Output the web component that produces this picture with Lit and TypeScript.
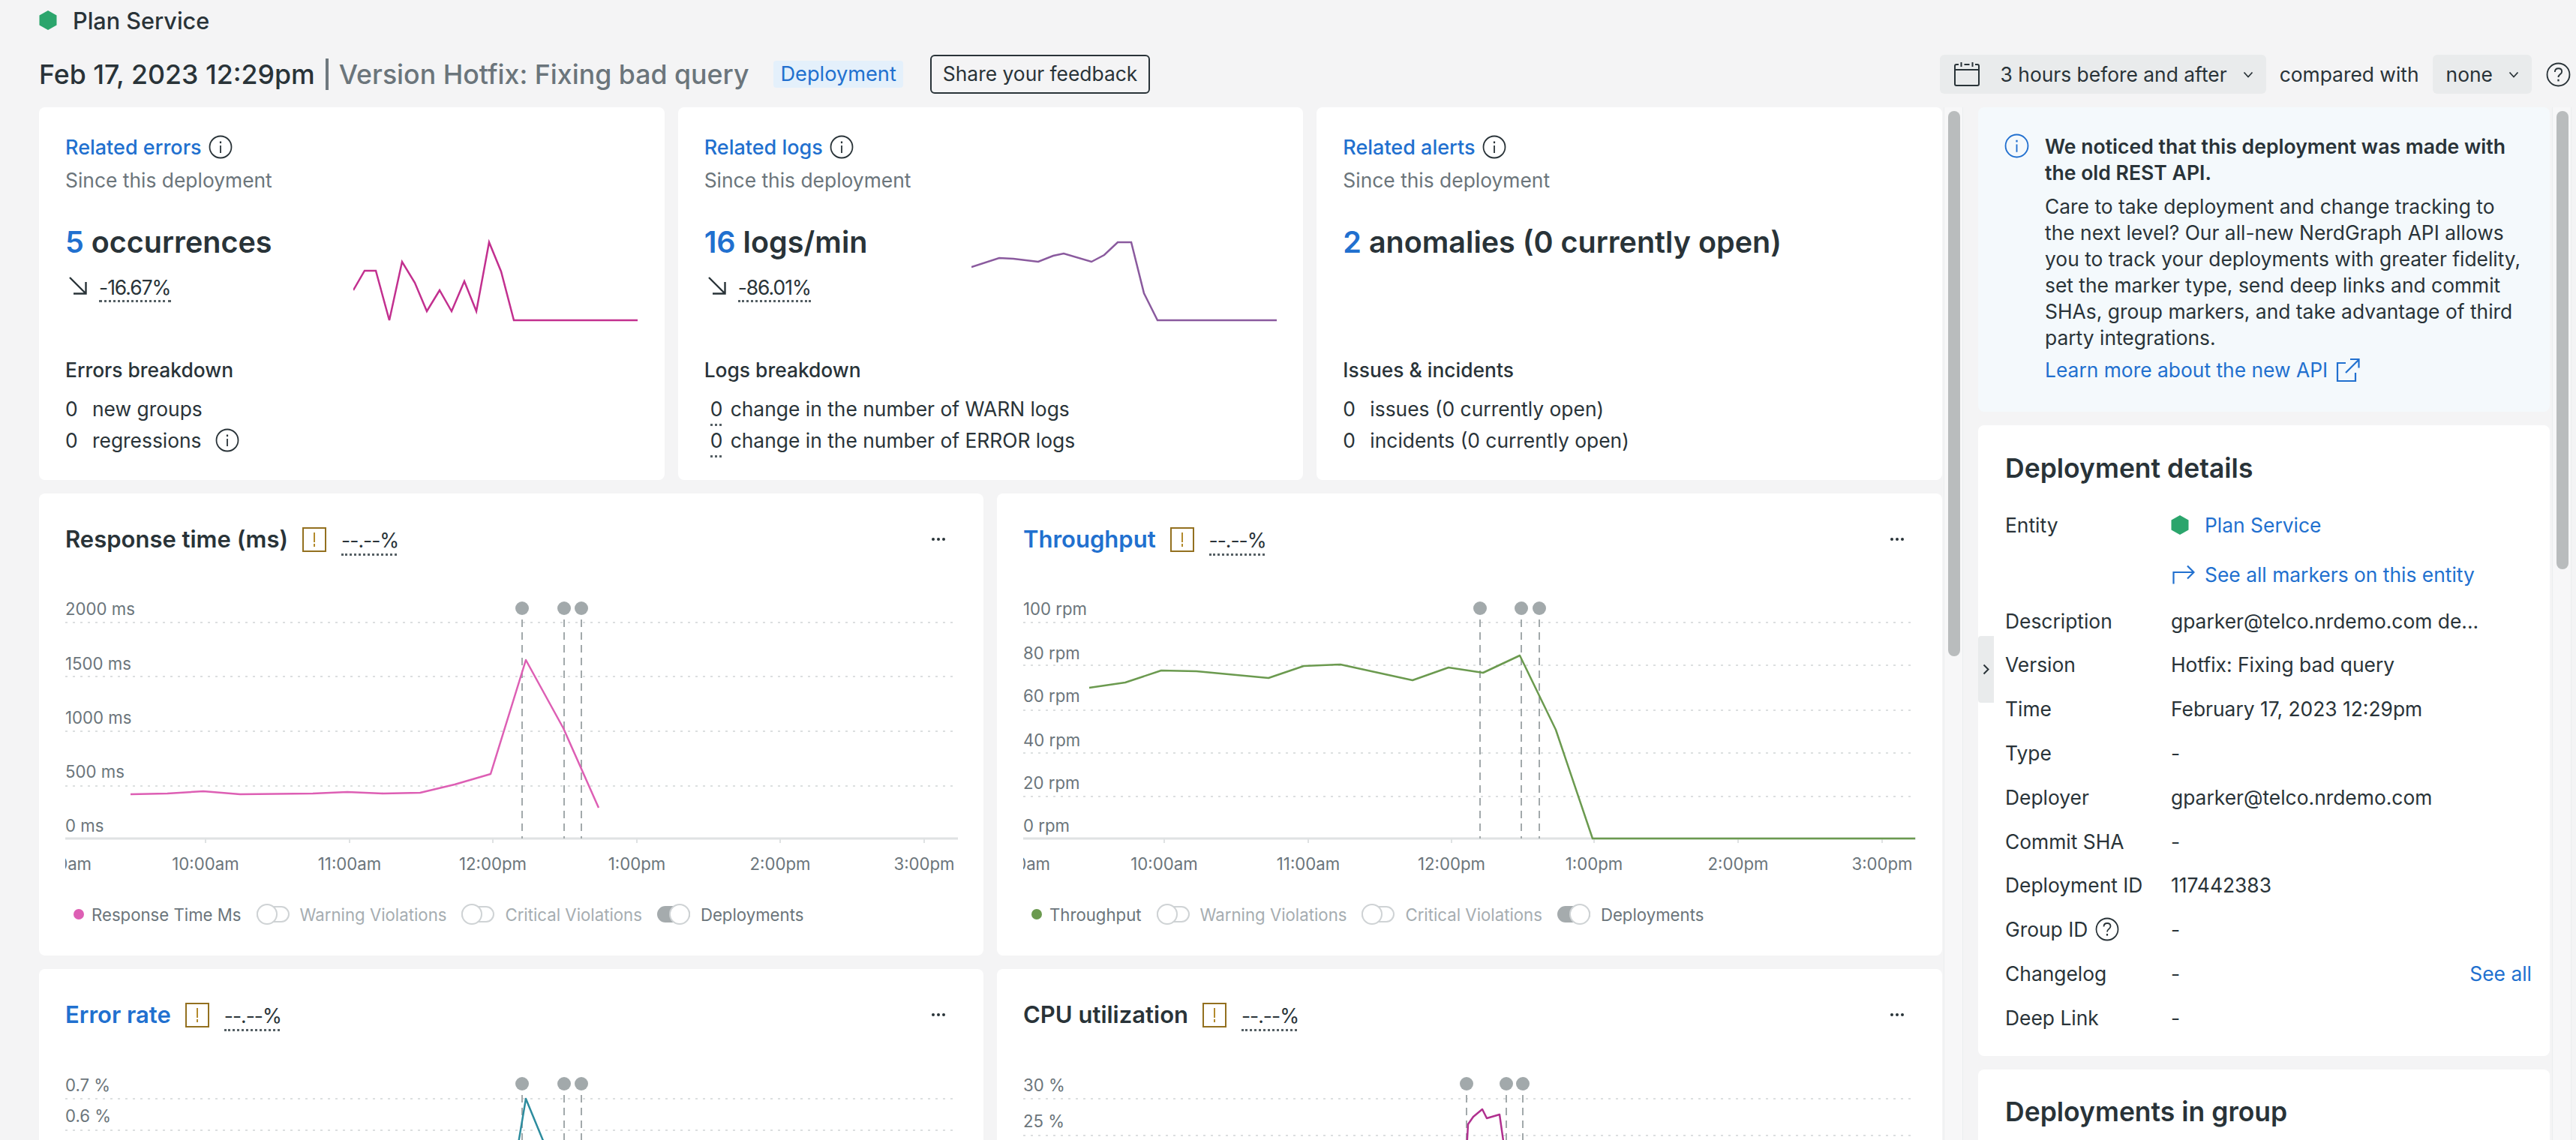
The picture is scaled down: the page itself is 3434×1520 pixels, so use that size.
import { LitElement, html, css, svg } from 'lit'
import { customElement, property } from 'lit/decorators.js'

type Pt = [number, number]

interface ChartConfig {
    title: string
    link?: boolean
    color: string
    legend?: string
    height: number
    gridY: number[]
    yLabels: [string, number][]
    ticks: number[]
    tickLabels: string[]
    markers: number[]
    line: Pt[]
}

const TICK_LABELS = ['9:00am', '10:00am', '11:00am', '12:00pm', '1:00pm', '2:00pm', '3:00pm']

const CHARTS: ChartConfig[] = [
    {
        title: 'Response time (ms)',
        color: '#dd5fb4',
        legend: 'Response Time Ms',
        height: 400,
        gridY: [40, 112, 185, 258],
        yLabels: [['2000 ms', 21], ['1500 ms', 94], ['1000 ms', 166], ['500 ms', 238], ['0 ms', 310]],
        ticks: [-5, 187, 379, 570, 762, 953, 1145],
        tickLabels: TICK_LABELS,
        markers: [609, 665, 688],
        line: [[87, 269], [136, 268], [184, 265], [233, 269], [330, 268], [376, 266], [424, 268], [473, 267], [519, 256], [567, 242], [614, 90], [664, 181], [711, 287]],
    },
    {
        title: 'Throughput',
        link: true,
        color: '#6b9a4f',
        legend: 'Throughput',
        height: 400,
        gridY: [40, 97, 157, 214, 272],
        yLabels: [['100 rpm', 21], ['80 rpm', 80], ['60 rpm', 137], ['40 rpm', 196], ['20 rpm', 253], ['0 rpm', 310]],
        ticks: [-4, 188, 380, 571, 761, 953, 1145],
        tickLabels: TICK_LABELS,
        markers: [609, 664, 688],
        line: [[88, 127], [136, 120], [184, 104], [231, 105], [327, 114], [374, 98], [423, 96], [519, 117], [567, 100], [613, 107], [662, 84], [710, 183], [759, 328], [1189, 328]],
    },
    {
        title: 'Error rate',
        link: true,
        color: '#2d8c9e',
        height: 100,
        gridY: [41, 83],
        yLabels: [['0.7 %', 22], ['0.6 %', 63], ['0.5 %', 104]],
        ticks: [],
        tickLabels: [],
        markers: [609, 665, 688],
        line: [[594, 160], [614, 41], [663, 160]],
    },
    {
        title: 'CPU utilization',
        color: '#b0308f',
        height: 100,
        gridY: [41, 90],
        yLabels: [['30 %', 22], ['25 %', 70]],
        ticks: [],
        tickLabels: [],
        markers: [591, 644, 666],
        line: [[590, 130], [593, 75], [600, 65], [612, 55], [618, 67], [635, 62], [645, 132]],
    },
]

const points = (pts: Pt[]) => pts.map((p) => p.join(',')).join(' ')

const infoIcon = (color = '#293338') => html`
    <svg class="round-icon" viewBox="0 0 32 32" fill="none" stroke=${color} stroke-width="1.8">
        <circle cx="16" cy="16" r="14.5"></circle>
        <path d="M16 14v10"></path>
        <path d="M16 8.500v2.600" stroke-width="2.200"></path>
    </svg>
`

const helpIcon = () => html`
    <svg class="round-icon" viewBox="0 0 32 32" fill="none" stroke="#293338" stroke-width="1.8">
        <circle cx="16" cy="16" r="14.5"></circle>
        <path d="M11.500 12.500c0-2.800 2-4.500 4.600-4.500s4.400 1.700 4.400 4c0 3.600-4.500 3.600-4.500 7.400"></path>
        <path d="M16 22v2.600" stroke-width="2.200"></path>
    </svg>
`

const hexagon = () => html`
    <svg class="hex" viewBox="0 0 26 26"><path fill="#2ba56c" d="M13 0l11.500 6.500v13L13 26 1.500 19.500v-13z"></path></svg>
`

const chevron = () => html`
    <svg class="chevron" viewBox="0 0 14 9" fill="none" stroke="#293338" stroke-width="1.8"><path d="M1.500 1.500L7 7.500l5.500-6"></path></svg>
`

@customElement('chart-card')
export class ChartCard extends LitElement {
    @property({ attribute: false })
    config!: ChartConfig

    static styles = css`
        :host {
            display: block;
            background: #fff;
            border-radius: 8px;
            padding: 44px 35px 0;
            font-family: Inter, 'Noto Sans', sans-serif;
            color: #293338;
            overflow: hidden;
        }
        .head {
            display: flex;
            align-items: center;
            height: 34px;
        }
        .title {
            font-size: 31px;
            font-weight: 600;
            line-height: 34px;
            white-space: nowrap;
        }
        .title.link {
            color: #2170cf;
        }
        .warn {
            box-sizing: border-box;
            width: 32px;
            height: 33px;
            margin-left: 19px;
            border: 2.500px solid #93701f;
            display: flex;
            align-items: center;
            justify-content: center;
        }
        .warn svg {
            width: 2px;
            height: 19px;
        }
        .pct {
            box-sizing: border-box;
            position: relative;
            top: 2px;
            width: 74px;
            height: 40px;
            margin-left: 20px;
            padding-top: 2px;
            font-size: 26.400px;
            letter-spacing: -1px;
            line-height: 34px;
            border-bottom: 3px dotted #555f64;
            white-space: nowrap;
        }
        .more {
            margin-left: auto;
            margin-right: 16px;
            display: flex;
            gap: 3px;
        }
        .more i {
            width: 4px;
            height: 4px;
            background: #293338;
            border-radius: 50%;
        }
        svg.plot {
            display: block;
            margin-top: 54px;
            overflow: hidden;
        }
        svg.plot text {
            font-family: Inter, sans-serif;
            font-size: 22.200px;
            fill: #6b757b;
            dominant-baseline: central;
        }
        .legend {
            display: flex;
            align-items: center;
            height: 30px;
            margin-top: 14px;
            padding-left: 11px;
            font-size: 22.200px;
            color: #6b757b;
            white-space: nowrap;
        }
        .dot {
            width: 14px;
            height: 14px;
            border-radius: 50%;
            margin-right: 10px;
        }
        .toggle {
            position: relative;
            box-sizing: border-box;
            width: 44px;
            height: 22px;
            border: 2px solid #cfd3d5;
            border-radius: 11px;
            margin: 0 14px 0 20px;
        }
        .toggle::after {
            content: '';
            position: absolute;
            left: -2px;
            top: -5px;
            width: 28px;
            height: 28px;
            box-sizing: border-box;
            background: #fff;
            border: 2px solid #cfd3d5;
            border-radius: 50%;
        }
        .toggle.on {
            background: #a5abad;
            border-color: #a5abad;
        }
        .toggle.on::after {
            left: 14px;
        }
        .off {
            color: #a6adb1;
        }
    `

    private renderPlot() {
        const c = this.config
        const axis = 328
        return html`
            <svg class="plot" width="1190" height=${c.height} viewBox="0 0 1190 ${c.height}">
                ${c.gridY.map((y) => svg`<line x1="0" x2="1190" y1=${y} y2=${y} stroke="#dcdfe0" stroke-width="2" stroke-dasharray="3 7"></line>`)}
                ${c.yLabels.map(([label, y]) => svg`<text x="0" y=${y}>${label}</text>`)}
                ${c.ticks.length
                    ? svg`<line x1="0" x2="1190" y1=${axis} y2=${axis} stroke="#dfe2e3" stroke-width="3"></line>`
                    : ''}
                ${c.ticks.map((x, i) => svg`
                    <line x1=${x} x2=${x} y1=${axis} y2=${axis + 6} stroke="#dfe2e3" stroke-width="2"></line>
                    <text x=${x} y="361" text-anchor="middle">${c.tickLabels[i]}</text>
                `)}
                ${c.markers.map((x) => svg`
                    <circle cx=${x} cy="21" r="9" fill="#a2a9ab"></circle>
                    <line x1=${x} x2=${x} y1="36" y2=${axis} stroke="#a2a9ab" stroke-width="2" stroke-dasharray="10 7"></line>
                `)}
                <polyline points=${points(c.line)} fill="none" stroke=${c.color} stroke-width="2.500" stroke-linejoin="round"></polyline>
            </svg>
        `
    }

    render() {
        const c = this.config
        return html`
            <div class="head">
                <span class="title ${c.link ? 'link' : ''}">${c.title}</span>
                <span class="warn">
                    <svg viewBox="0 0 2 19"><path fill="#b38a2d" d="M0 0h2v13H0zM0 15h2v4H0z"></path></svg>
                </span>
                <span class="pct">--.--%</span>
                <span class="more"><i></i><i></i><i></i></span>
            </div>
            ${this.renderPlot()}
            ${c.legend
                ? html`
                      <div class="legend">
                          <span class="dot" style="background: ${c.color}"></span>
                          <span>${c.legend}</span>
                          <span class="toggle"></span><span class="off">Warning Violations</span>
                          <span class="toggle"></span><span class="off">Critical Violations</span>
                          <span class="toggle on"></span><span>Deployments</span>
                      </div>
                  `
                : ''}
        `
    }
}

@customElement('app-root')
export class AppRoot extends LitElement {
    static styles = css`
        :host {
            display: block;
            width: 3434px;
            height: 1520px;
            overflow: hidden;
            background: #f4f4f5;
            font-family: Inter, 'Noto Sans', sans-serif;
            font-size: 26.400px;
            color: #293338;
        }
        a {
            color: #2170cf;
            text-decoration: none;
        }
        .round-icon {
            width: 32px;
            height: 32px;
            flex: none;
        }
        .hex {
            width: 26px;
            height: 26px;
            flex: none;
        }
        .chevron {
            width: 14px;
            height: 9px;
            flex: none;
        }
        .entity {
            display: flex;
            align-items: center;
            gap: 20px;
            height: 54px;
            padding-left: 51px;
            font-size: 30.600px;
            font-weight: 500;
        }
        .toolbar {
            display: flex;
            align-items: center;
            height: 52px;
            margin-top: 19px;
            padding-left: 52px;
            white-space: nowrap;
        }
        .when {
            font-size: 35.700px;
            font-weight: 500;
        }
        .sep {
            width: 4px;
            height: 42px;
            background: #6f797f;
            margin: 0 14px;
        }
        .version {
            font-size: 35.700px;
            font-weight: 500;
            color: #6b757b;
        }
        .badge {
            margin-left: 33px;
            height: 36px;
            line-height: 36px;
            padding: 0 9px;
            border-radius: 4px;
            background: #e4f0fb;
            color: #2170cf;
            font-size: 27.200px;
        }
        .feedback {
            box-sizing: border-box;
            margin-left: 36px;
            height: 52px;
            line-height: 47px;
            padding: 0 15px;
            border: 2.500px solid #293338;
            border-radius: 6px;
        }
        .controls {
            margin-left: auto;
            display: flex;
            align-items: center;
            padding-right: 7px;
        }
        .select {
            display: flex;
            align-items: center;
            height: 52px;
            border-radius: 6px;
            background: #e9ebec;
            padding: 0 17px 0 18px;
        }
        .select svg.cal {
            width: 36px;
            height: 32px;
            margin-right: 27px;
            flex: none;
        }
        .select .chevron {
            margin-left: 21px;
        }
        .compared {
            margin: 0 18px;
        }
        .controls > .round-icon {
            width: 33px;
            height: 33px;
            margin-left: 19px;
        }
        .body {
            display: flex;
            margin-top: 18px;
            height: 1377px;
            overflow: hidden;
        }
        .main {
            width: 2537px;
            margin-left: 52px;
            flex: none;
        }
        .stats {
            display: grid;
            grid-template-columns: repeat(3, 1fr);
            gap: 18px;
        }
        .stat {
            height: 497px;
            box-sizing: border-box;
            background: #fff;
            border-radius: 8px;
            padding: 38px 35px 0;
        }
        .stat-title {
            display: flex;
            align-items: center;
            gap: 9px;
            height: 30px;
            font-size: 27px;
            font-weight: 500;
        }
        .muted {
            height: 30px;
            line-height: 30px;
            margin-top: 14px;
            color: #6b757b;
        }
        .metric {
            display: flex;
            justify-content: space-between;
            height: 130px;
            margin-top: 45px;
        }
        .big {
            height: 50px;
            line-height: 50px;
            margin-top: -2px;
            font-size: 39.500px;
            font-weight: 600;
            white-space: nowrap;
        }
        .big b {
            color: #2170cf;
            font-weight: 600;
        }
        .change {
            display: flex;
            align-items: center;
            gap: 16px;
            height: 42px;
            margin-top: 12px;
        }
        .change svg {
            width: 24px;
            height: 24px;
            margin-left: 5px;
        }
        .change span {
            line-height: 34px;
            padding-top: 6px;
            letter-spacing: -1px;
            border-bottom: 3px dotted #555f64;
        }
        .spark {
            display: block;
            flex: none;
        }
        .sub-title {
            height: 30px;
            line-height: 30px;
            margin-top: 48px;
            font-weight: 500;
        }
        .count {
            display: flex;
            align-items: center;
            height: 30px;
            margin-top: 12px;
            white-space: nowrap;
        }
        .count.first {
            margin-top: 22px;
        }
        .count .n {
            width: 36px;
            flex: none;
        }
        .count .round-icon {
            margin-left: 18px;
        }
        .count u {
            box-sizing: border-box;
            text-decoration: none;
            border-bottom: 3px dotted #555f64;
            width: 15px;
            height: 38px;
            line-height: 30px;
            margin: 8px 12px 0 8px;
            flex: none;
        }
        .charts {
            display: grid;
            grid-template-columns: 1259px 1260px;
            grid-template-rows: 616px 300px;
            gap: 18px;
            margin-top: 18px;
        }
        .scroll {
            flex: none;
            box-sizing: border-box;
            width: 26px;
            margin-left: 2px;
            padding-left: 5px;
            background: #f7f7f8;
            border-left: 1px solid #ebedee;
            border-right: 1px solid #ebedee;
        }
        .scroll.right {
            margin-left: 3px;
        }
        .scroll i {
            display: block;
            width: 16px;
            background: #b9bcbd;
            border-radius: 8px;
            margin-top: 5px;
        }
        .panel {
            position: relative;
            flex: none;
            width: 762px;
            margin-left: 20px;
        }
        .notice {
            box-sizing: border-box;
            display: flex;
            gap: 21px;
            height: 406px;
            background: #f4f9fc;
            border-radius: 8px;
            padding: 35px 0 0 35px;
            line-height: 35px;
        }
        .notice .round-icon {
            width: 33px;
            height: 33px;
        }
        .notice-text {
            width: 640px;
        }
        .notice p {
            margin: 0;
        }
        .notice .strong {
            font-size: 26.600px;
            font-weight: 600;
            margin-bottom: 10px;
        }
        .notice a {
            display: flex;
            align-items: center;
            gap: 10px;
            margin-top: 8px;
        }
        .notice a svg {
            width: 34px;
            height: 34px;
        }
        .details {
            box-sizing: border-box;
            background: #fff;
            border-radius: 8px;
            margin-top: 18px;
            height: 841px;
            padding: 38px 24px 0 36px;
        }
        .details h2,
        .group h2 {
            margin: 0;
            font-size: 35.500px;
            line-height: 40px;
            font-weight: 600;
        }
        .rows {
            margin-top: 26px;
        }
        .row {
            display: grid;
            grid-template-columns: 221px 1fr auto;
            align-items: center;
            height: 58.800px;
            white-space: nowrap;
        }
        .row .label {
            display: flex;
            align-items: center;
            gap: 10px;
        }
        .row .value {
            display: flex;
            align-items: center;
            gap: 20px;
        }
        .row.tall {
            box-sizing: border-box;
            height: 68.500px;
            padding-top: 4px;
        }
        .row.tall .value {
            gap: 13px;
        }
        .row .hex {
            margin-left: -1px;
        }
        .row svg.go {
            width: 30px;
            height: 26px;
            margin-left: 2px;
            flex: none;
        }
        .group {
            box-sizing: border-box;
            background: #fff;
            border-radius: 8px;
            margin-top: 18px;
            height: 200px;
            padding: 37px 36px 0;
        }
        .handle {
            position: absolute;
            left: 0;
            top: 705px;
            width: 21px;
            height: 89px;
            background: #e9ebec;
            border-radius: 4px 0 0 4px;
            display: flex;
            align-items: center;
            justify-content: center;
        }
        .handle svg {
            width: 9px;
            height: 15px;
        }
    `

    private renderStat(
        title: string,
        value: string,
        unit: string,
        change: string | null,
        spark: { w: number; color: string; pts: Pt[] } | null,
        body: unknown,
    ) {
        return html`
            <div class="stat">
                <div class="stat-title"><a>${title}</a>${infoIcon()}</div>
                <div class="muted">Since this deployment</div>
                <div class="metric">
                    <div>
                        <div class="big"><b>${value}</b> ${unit}</div>
                        ${change
                            ? html`<div class="change">
                                  <svg viewBox="0 0 24 24" fill="none" stroke="#293338" stroke-width="2.400">
                                      <path d="M1 1l21 21M22.500 7v15.500H6"></path>
                                  </svg>
                                  <span>${change}</span>
                              </div>`
                            : ''}
                    </div>
                    ${spark
                        ? html`<svg class="spark" width=${spark.w} height="130" viewBox="0 0 ${spark.w} 130">
                              <polyline points=${points(spark.pts)} fill="none" stroke=${spark.color} stroke-width="2.500"></polyline>
                          </svg>`
                        : ''}
                </div>
                ${body}
            </div>
        `
    }

    private renderRow(label: unknown, value: unknown, extra: unknown = '') {
        return html`
            <div class="row">
                <div class="label">${label}</div>
                <div class="value">${value}</div>
                <div>${extra}</div>
            </div>
        `
    }

    render() {
        return html`
            <div class="entity">${hexagon()}<span>Plan Service</span></div>
            <div class="toolbar">
                <span class="when">Feb 17, 2023 12:29pm</span>
                <span class="sep"></span>
                <span class="version">Version Hotfix: Fixing bad query</span>
                <span class="badge">Deployment</span>
                <span class="feedback">Share your feedback</span>
                <div class="controls">
                    <div class="select">
                        <svg class="cal" viewBox="0 0 36 32" fill="none" stroke="#293338" stroke-width="2">
                            <path d="M2 10V5a2 2 0 0 1 2-2h3M29 3h3a2 2 0 0 1 2 2v5"></path>
                            <path d="M10.500 0v6M25.500 0v6M14.500 3h7"></path>
                            <path d="M2 10h32v19a2 2 0 0 1-2 2H4a2 2 0 0 1-2-2z"></path>
                        </svg>
                        <span>3 hours before and after</span>
                        ${chevron()}
                    </div>
                    <span class="compared">compared with</span>
                    <div class="select"><span>none</span>${chevron()}</div>
                    ${helpIcon()}
                </div>
            </div>
            <div class="body">
                <div class="main">
                    <div class="stats">
                        ${this.renderStat(
                            'Related errors',
                            '5',
                            'occurrences',
                            '-16.67%',
                            {
                                w: 380,
                                color: '#c2308f',
                                pts: [[0, 87], [15, 61], [30, 61], [48, 127], [65, 49], [82, 77], [98, 115], [115, 87], [131, 115], [148, 75], [164, 115], [181, 23], [197, 62], [214, 127], [379, 127]],
                            },
                            html`
                                <div class="sub-title">Errors breakdown</div>
                                <div class="count first"><span class="n">0</span><span>new groups</span></div>
                                <div class="count"><span class="n">0</span><span>regressions</span>${infoIcon()}</div>
                            `,
                        )}
                        ${this.renderStat(
                            'Related logs',
                            '16',
                            'logs/min',
                            '-86.01%',
                            {
                                w: 407,
                                color: '#8a5a9e',
                                pts: [[0, 56], [37, 44], [56, 45], [89, 49], [109, 41], [123, 38], [160, 49], [177, 40], [195, 23], [213, 23], [230, 91], [248, 127], [407, 127]],
                            },
                            html`
                                <div class="sub-title">Logs breakdown</div>
                                <div class="count first"><u>0</u><span>change in the number of WARN logs</span></div>
                                <div class="count"><u>0</u><span>change in the number of ERROR logs</span></div>
                            `,
                        )}
                        ${this.renderStat(
                            'Related alerts',
                            '2',
                            'anomalies (0 currently open)',
                            null,
                            null,
                            html`
                                <div class="sub-title">Issues &amp; incidents</div>
                                <div class="count first"><span class="n">0</span><span>issues (0 currently open)</span></div>
                                <div class="count"><span class="n">0</span><span>incidents (0 currently open)</span></div>
                            `,
                        )}
                    </div>
                    <div class="charts">
                        ${CHARTS.map((c) => html`<chart-card .config=${c}></chart-card>`)}
                    </div>
                </div>
                <div class="scroll"><i style="height: 727px"></i></div>
                <div class="panel">
                    <div class="notice">
                        ${infoIcon('#2170cf')}
                        <div class="notice-text">
                            <p class="strong">We noticed that this deployment was made with the old REST API.</p>
                            <p>
                                Care to take deployment and change tracking to the next level? Our all-new NerdGraph API allows
                                you to track your deployments with greater fidelity, set the marker type, send deep links and
                                commit SHAs, group markers, and take advantage of third party integrations.
                            </p>
                            <a>
                                Learn more about the new API
                                <svg viewBox="0 0 34 34" fill="none" stroke="#2170cf" stroke-width="2.200">
                                    <path d="M14 7H3v24h24V20"></path>
                                    <path d="M14 20L31 3M20 2h11.500v11.500"></path>
                                </svg>
                            </a>
                        </div>
                    </div>
                    <div class="details">
                        <h2>Deployment details</h2>
                        <div class="rows">
                            ${this.renderRow('Entity', html`${hexagon()}<a>Plan Service</a>`)}
                            <div class="row tall">
                                <div></div>
                                <div class="value">
                                    <svg class="go" viewBox="0 0 30 26" fill="none" stroke="#2170cf" stroke-width="2.200">
                                        <path d="M1.500 25.500V10h27M20 1.500l8.500 8.500-8.500 8.500"></path>
                                    </svg>
                                    <a>See all markers on this entity</a>
                                </div>
                                <div></div>
                            </div>
                            ${this.renderRow('Description', 'gparker@telco.nrdemo.com de...')}
                            ${this.renderRow('Version', 'Hotfix: Fixing bad query')}
                            ${this.renderRow('Time', 'February 17, 2023 12:29pm')}
                            ${this.renderRow('Type', '-')}
                            ${this.renderRow('Deployer', 'gparker@telco.nrdemo.com')}
                            ${this.renderRow('Commit SHA', '-')}
                            ${this.renderRow('Deployment ID', '117442383')}
                            ${this.renderRow(html`<span>Group ID</span>${helpIcon()}`, '-')}
                            ${this.renderRow('Changelog', '-', html`<a>See all</a>`)}
                            ${this.renderRow('Deep Link', '-')}
                        </div>
                    </div>
                    <div class="group"><h2>Deployments in group</h2></div>
                    <div class="handle">
                        <svg viewBox="0 0 9 15" fill="none" stroke="#293338" stroke-width="2"><path d="M1.500 1.500l6 6-6 6"></path></svg>
                    </div>
                </div>
                <div class="scroll right"><i style="height: 611px"></i></div>
            </div>
        `
    }
}
